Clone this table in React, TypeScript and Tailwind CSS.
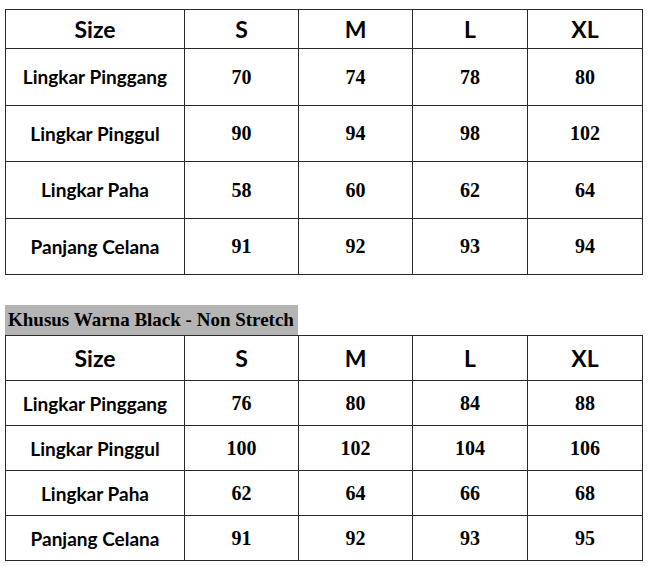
const sizes = ["S", "M", "L", "XL"]

const regular = [
  { label: "Lingkar Pinggang", values: [70, 74, 78, 80] },
  { label: "Lingkar Pinggul", values: [90, 94, 98, 102] },
  { label: "Lingkar Paha", values: [58, 60, 62, 64] },
  { label: "Panjang Celana", values: [91, 92, 93, 94] },
]

const black = [
  { label: "Lingkar Pinggang", values: [76, 80, 84, 88] },
  { label: "Lingkar Pinggul", values: [100, 102, 104, 106] },
  { label: "Lingkar Paha", values: [62, 64, 66, 68] },
  { label: "Panjang Celana", values: [91, 92, 93, 95] },
]

type Row = { label: string; values: number[] }

const sans = "font-['Lato','Open_Sans',sans-serif] font-bold"
const serif = "font-['Liberation_Serif','Times_New_Roman',serif] font-bold"

function SizeTable({ rows, headH, rowH }: { rows: Row[]; headH: string; rowH: string }) {
  const cell = "border border-[#2a2a2a] text-center align-middle text-black leading-none"
  return (
    <table className="w-[637px] table-fixed border-collapse">
      <colgroup>
        <col className="w-[179px]" />
        <col className="w-[114px]" />
        <col className="w-[114px]" />
        <col className="w-[115px]" />
        <col className="w-[115px]" />
      </colgroup>
      <thead>
        <tr className={headH}>
          <th className={`${cell} ${sans} text-[23px]`}>Size</th>
          {sizes.map((s) => (
            <th key={s} className={`${cell} ${sans} text-[23px]`}>
              {s}
            </th>
          ))}
        </tr>
      </thead>
      <tbody>
        {rows.map((r) => (
          <tr key={r.label} className={rowH}>
            <td className={`${cell} ${sans} text-[19px]`}>{r.label}</td>
            {r.values.map((v, i) => (
              <td key={i} className={`${cell} ${serif} text-[20px]`}>
                {v}
              </td>
            ))}
          </tr>
        ))}
      </tbody>
    </table>
  )
}

export default function App() {
  return (
    <div className="h-[568px] w-[648px] bg-white pt-[9px] pl-[5px]">
      <SizeTable rows={regular} headH="h-[39px]" rowH="h-[56.5px]" />
      <div className="mt-[30px] flex h-[30px] w-[293px] items-center bg-[#b4b4b4] pl-[3px] font-['Liberation_Serif','Times_New_Roman',serif] text-[19px] font-bold text-black">
        Khusus Warna Black - Non Stretch
      </div>
      <SizeTable rows={black} headH="h-[45px]" rowH="h-[45px]" />
    </div>
  )
}
